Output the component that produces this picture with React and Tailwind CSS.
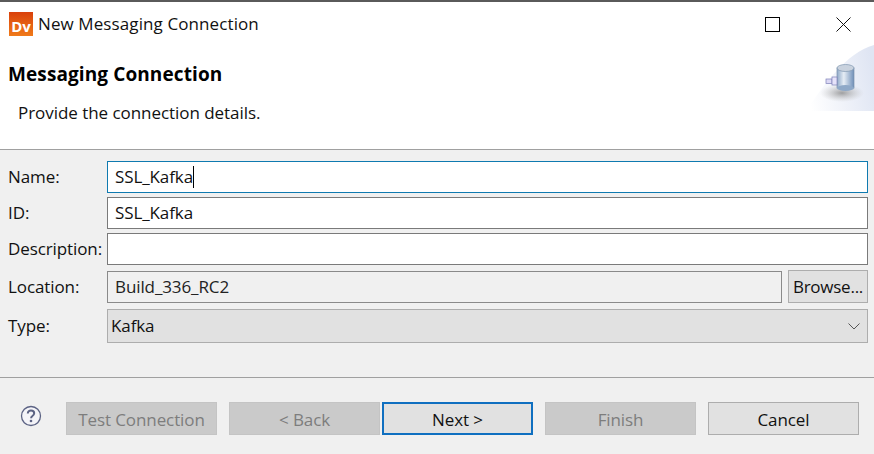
import React from "react";

function Row({ label, children, className }) {
  return (
    <div className={"flex items-center " + className}>
      <div className="w-[107px] pl-2 text-[17px] leading-[24px] text-[#111] tracking-[-0.1px]">{label}</div>
      {children}
    </div>
  );
}

function Btn({ children, disabled, focus, className = "" }) {
  const c = disabled
    ? "bg-[#cacaca] border-[#c4c4c4] text-[#7d7d7d]"
    : focus
    ? "bg-[#e1e1e1] border-2 border-[#0f6fc0] text-[#111]"
    : "bg-[#e1e1e1] border-[#adadad] text-[#111]";
  return (
    <div className={"w-[151px] h-[33px] border flex items-center justify-center pt-[2px] text-[17px] tracking-[-0.1px] " + c + " " + className}>
      {children}
    </div>
  );
}

export default function App() {
  return (
    <div className="w-[874px] h-[454px] bg-[#f0f0f0] flex flex-col overflow-hidden" style={{ fontFamily: '"Open Sans", "Noto Sans", sans-serif' }}>
      <div className="bg-white h-[150px] border-b border-[#a0a0a0] border-t-2 border-t-[#5a5a5a] shrink-0 relative flex flex-col">
        <div className="flex items-center h-[44px] pl-[9px]">
          <div className="w-[24px] h-[24px] mr-[5px] mt-[-1px] bg-gradient-to-b from-[#d9400b] to-[#f07a1a] flex items-end justify-center text-white font-bold text-[15px] leading-[19px]">
            Dv
          </div>
          <span className="text-[17px] text-[#111] tracking-[0.1px]">New Messaging Connection</span>
          <div className="ml-auto flex items-center">
            <div className="w-[15px] h-[15px] border-[1.5px] border-black mr-[56px]" />
            <svg width="15" height="15" viewBox="0 0 15 15" className="mr-[23px]">
              <path d="M0.5 0.5 L14.5 14.5 M14.5 0.5 L0.5 14.5" stroke="#111" strokeWidth="1" fill="none" />
            </svg>
          </div>
        </div>
        <div className="pl-2 mt-[15px] text-[19px] leading-[26px] font-bold text-black tracking-[0.1px]">Messaging Connection</div>
        <div className="pl-[18px] mt-[14px] text-[17px] leading-[24px] text-[#111] tracking-[-0.05px]">Provide the connection details.</div>
        <div className="absolute right-0 top-[41px] w-[68px] h-[68px]">
          <svg width="68" height="68" viewBox="0 0 68 68">
            <defs>
              <linearGradient id="bg" x1="0" y1="0.6" x2="1" y2="0.4">
                <stop offset="0" stopColor="#ffffff" />
                <stop offset="1" stopColor="#dfe5f3" />
              </linearGradient>
              <linearGradient id="cyl" x1="0" y1="0" x2="1" y2="0">
                <stop offset="0" stopColor="#8fa9c8" />
                <stop offset="0.4" stopColor="#e6edf5" />
                <stop offset="1" stopColor="#6f8fb8" />
              </linearGradient>
              <radialGradient id="sh">
                <stop offset="0" stopColor="#8a8a8a" stopOpacity="0.8" />
                <stop offset="1" stopColor="#bbb" stopOpacity="0" />
              </radialGradient>
            </defs>
            <path d="M0 68 C18 42 40 10 68 2 L68 68 Z" fill="url(#bg)" />
            <ellipse cx="36" cy="50" rx="22" ry="9" fill="url(#sh)" />
            <rect x="31" y="25" width="17" height="20" fill="url(#cyl)" stroke="#7d93ad" strokeWidth="0.7" />
            <ellipse cx="39.5" cy="45" rx="8.5" ry="3" fill="#8fa9c8" />
            <ellipse cx="39.5" cy="25" rx="8.5" ry="3.5" fill="#c9d2de" stroke="#8097b0" strokeWidth="0.7" />
            <rect x="20" y="36" width="6" height="4.5" fill="#dcd9f5" stroke="#7e80b8" strokeWidth="0.7" />
            <rect x="26" y="34" width="5" height="8" fill="#e6e3fa" stroke="#7e80b8" strokeWidth="0.7" />
          </svg>
        </div>
      </div>

      <div className="flex flex-col pt-[11px] pr-[6px] h-[228px] shrink-0 border-b border-[#a0a0a0]">
        <Row label="Name:" className="h-[32px]">
          <div className="flex-1 h-[32px] bg-white border border-[#0f7ab0] flex items-center pl-[7px] text-[17px] text-[#111] tracking-[-0.1px]">
            SSL_Kafka<span className="w-px h-[22px] bg-black" />
          </div>
        </Row>
        <Row label="ID:" className="h-[32px] mt-[4px]">
          <div className="flex-1 h-[32px] bg-white border border-[#7a7a7a] flex items-center pl-[7px] text-[17px] text-[#111] tracking-[-0.1px]">SSL_Kafka</div>
        </Row>
        <Row label="Description:" className="h-[32px] mt-[4px] whitespace-nowrap">
          <div className="flex-1 h-[32px] bg-white border border-[#7a7a7a]" />
        </Row>
        <Row label="Location:" className="h-[33px] mt-[5px]">
          <div className="flex-1 h-[32px] bg-[#f0f0f0] border border-[#8a8a8a] flex items-center pl-[7px] text-[17px] text-[#222] tracking-[-0.1px]">Build_336_RC2</div>
          <div className="w-[80px] h-[33px] ml-[6px] bg-[#e1e1e1] border border-[#adadad] flex items-center justify-center text-[17px] text-[#111] tracking-[-0.25px]">Browse...</div>
        </Row>
        <Row label="Type:" className="h-[34px] mt-[6px]">
          <div className="flex-1 h-[34px] bg-[#e1e1e1] border border-[#adadad] flex items-center pl-[3px] pr-[7px] justify-between text-[17px] text-[#111]">
            <span className="tracking-[-0.1px]">Kafka</span>
            <svg width="12" height="7" viewBox="0 0 12 7">
              <path d="M0.5 0.5 L6 6 L11.5 0.5" stroke="#555" strokeWidth="1" fill="none" />
            </svg>
          </div>
        </Row>
      </div>

      <div className="flex items-center pl-[20px] pt-[24px]">
        <svg width="22" height="22" viewBox="0 0 22 22" className="mr-[24px] mt-[-5px]">
          <circle cx="11" cy="11" r="9.5" fill="#f4f4f8" stroke="#5c6384" strokeWidth="1.3" />
          <path d="M7.8 8.6 C7.8 6.6 9.2 5.6 11 5.6 C12.9 5.6 14.2 6.7 14.2 8.3 C14.2 9.6 13.4 10.3 12.4 11 C11.5 11.6 11.1 12 11.1 13.2" stroke="#5c6384" strokeWidth="2" fill="none" />
          <circle cx="11" cy="16" r="1.3" fill="#5c6384" />
        </svg>
        <Btn disabled>Test Connection</Btn>
        <Btn disabled className="ml-[12px]">&lt; Back</Btn>
        <Btn focus className="ml-[2px]">Next &gt;</Btn>
        <Btn disabled className="ml-[12px]">Finish</Btn>
        <Btn className="ml-[12px]">Cancel</Btn>
      </div>
    </div>
  );
}
